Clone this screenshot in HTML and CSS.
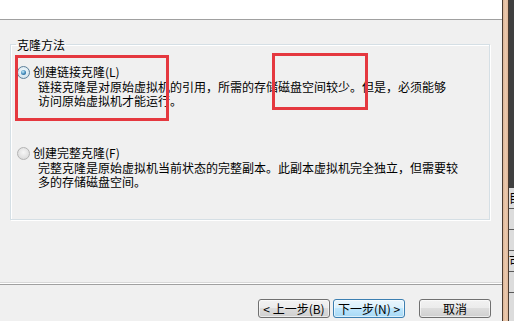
FILE: index.html
```html
<!DOCTYPE html>
<html lang="zh-CN">
<head>
    <meta charset="UTF-8">
    <title>克隆虚拟机向导</title>
    <link rel="stylesheet" href="styles.css">
</head>
<body>
    <div class="screen">
        <div class="dialog">
            <div class="header"></div>

            <div class="body">
                <fieldset class="group">
                    <legend>克隆方法</legend>

                    <div class="option">
                        <div class="option-label"><span class="radio checked"></span>创建链接克隆(L)</div>
                        <div class="option-desc">
                            <span>链接克隆是对原始虚拟机的引用，所需的存储磁盘空间较少。但是，必须能够</span>
                            <span>访问原始虚拟机才能运行。</span>
                        </div>
                    </div>

                    <div class="option option-full">
                        <div class="option-label"><span class="radio"></span>创建完整克隆(F)</div>
                        <div class="option-desc">
                            <span>完整克隆是原始虚拟机当前状态的完整副本。此副本虚拟机完全独立，但需要较</span>
                            <span>多的存储磁盘空间。</span>
                        </div>
                    </div>
                </fieldset>
            </div>

            <div class="separator"></div>

            <div class="footer">
                <button class="btn">&lt; 上一步(B)</button>
                <button class="btn btn-focus">下一步(N) &gt;</button>
                <button class="btn btn-cancel">取消</button>
            </div>
        </div>

        <div class="side">
            <div class="side-edge"></div>
            <div class="side-frame"></div>
            <div class="side-edge"></div>
            <div class="side-window">
                <div class="side-dark"></div>
                <div class="side-row">目</div>
                <div class="side-row"></div>
                <div class="side-row"></div>
                <div class="side-row">可</div>
                <div class="side-row"></div>
            </div>
        </div>

        <!-- annotation boxes drawn over the screenshot -->
        <div class="mark mark-left"></div>
        <div class="mark mark-right"></div>
    </div>
</body>
</html>
```

FILE: styles.css
```css
body {
    margin: 0;
    font-family: "Noto Sans CJK SC", "Liberation Sans", sans-serif;
    font-size: 12px;
    color: #000;
}

.screen {
    position: relative;
    width: 514px;
    height: 321px;
    display: flex;
    overflow: hidden;
}

.dialog {
    width: 502px;
    flex-shrink: 0;
    background: #f0f0f0;
    display: flex;
    flex-direction: column;
}

.header {
    height: 19px;
    background: #fff;
    border-bottom: 1px solid #a0a0a0;
}

.body {
    flex: 1;
    padding: 18px 12px 0 10px;
}

.group {
    margin: 0;
    padding: 13px 12px 30px 6px;
    border: 1px solid #d5dfe5;
    box-shadow: inset 1px 1px 0 #fff, 1px 1px 0 #fff;
}

.group legend {
    padding: 0 1px;
    margin-left: -1px;
    line-height: 13px;
}

.option-label {
    display: flex;
    align-items: center;
    height: 16px;
    line-height: 16px;
}

.option-desc {
    padding-left: 21px;
}

.option-desc span {
    display: block;
    line-height: 14px;
    white-space: nowrap;
}

.option-full {
    margin-top: 37px;
}

.radio {
    position: relative;
    width: 11px;
    height: 11px;
    margin-right: 3px;
    border: 1px solid #b3b3b3;
    border-radius: 50%;
    background: radial-gradient(circle at 50% 40%, #f6f6f6 0%, #dedede 70%, #cfcfcf 100%);
}

.radio.checked {
    border-color: #5c7f99;
    background: radial-gradient(circle at 50% 40%, #f4fafd 0%, #d6e6ef 70%, #b4c8d6 100%);
}

.radio.checked::after {
    content: "";
    position: absolute;
    left: 3px;
    top: 3px;
    width: 5px;
    height: 5px;
    border-radius: 50%;
    background: radial-gradient(circle at 40% 35%, #c6ecfb 0%, #3d86b8 55%, #1c4f78 100%);
}

.separator {
    height: 1px;
    background: #fff;
    border-top: 1px solid #d8d8d8;
    border-bottom: 1px solid #a0a0a0;
}

.footer {
    height: 36px;
    box-sizing: border-box;
    padding: 14px 11px 0 0;
    display: flex;
    justify-content: flex-end;
    align-items: flex-start;
    gap: 3px;
}

.btn {
    width: 72px;
    height: 19px;
    padding: 0;
    font-family: inherit;
    font-size: 12px;
    line-height: 17px;
    color: #000;
    border: 1px solid #707070;
    border-radius: 3px;
    background: linear-gradient(#f2f2f2 0%, #ebebeb 50%, #dddddd 50%, #cfcfcf 100%);
    box-shadow: inset 0 0 0 1px rgba(255, 255, 255, 0.6);
}

.btn-focus {
    border-color: #3c7fb1;
    background: linear-gradient(#eaf6fd 0%, #d9f0fc 50%, #bee6fd 50%, #a7d9f5 100%);
}

.btn-cancel {
    margin-left: 11px;
}

.side {
    flex: 1;
    min-width: 0;
    display: flex;
}

.side-edge {
    width: 1px;
    flex-shrink: 0;
    background: #4a3b31;
}

.side-frame {
    width: 5px;
    flex-shrink: 0;
    background: linear-gradient(90deg, #d9b497, #ecc9ad 50%, #deb89b);
}

.side-window {
    flex: 1;
    min-width: 0;
    display: flex;
    flex-direction: column;
    background: #dcdcdc;
}

.side-dark {
    height: 188px;
    background: #3f3f3f;
}

.side-row {
    height: 20px;
    border-bottom: 1px solid #5a5a5a;
    line-height: 20px;
    overflow: hidden;
    font-size: 12px;
}

.mark {
    position: absolute;
    border: 3px solid #e5383f;
    box-sizing: border-box;
}

.mark-left {
    left: 15px;
    top: 55px;
    width: 154px;
    height: 66px;
}

.mark-right {
    left: 272px;
    top: 53px;
    width: 96px;
    height: 57px;
}
```
